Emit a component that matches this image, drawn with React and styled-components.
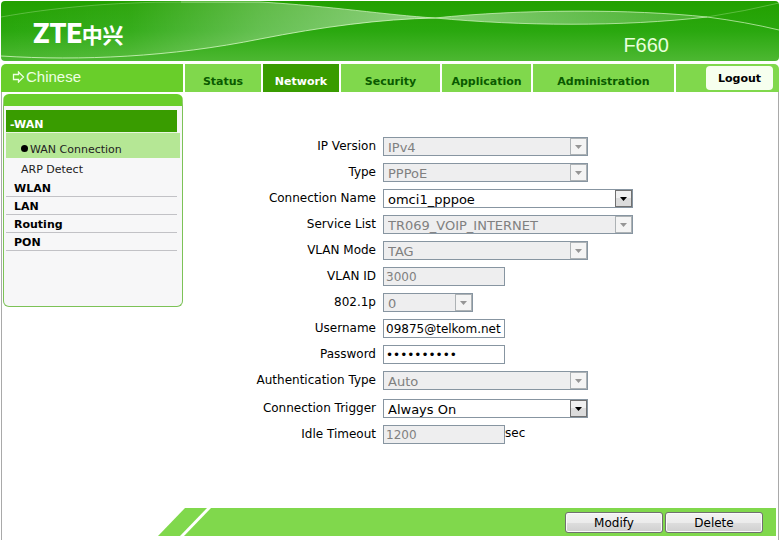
import React from 'react';
import styled, { createGlobalStyle, css } from 'styled-components';

const GlobalStyle = createGlobalStyle`
  * {
    box-sizing: border-box;
  }

  body {
    margin: 0;
    background: #ffffff;
    color: #000000;
    font-family: Verdana, 'DejaVu Sans', sans-serif;
    font-size: 12px;
  }

  button,
  input,
  select {
    font-family: inherit;
    margin: 0;
  }
`;

const Page = styled.div`
  display: flex;
  flex-direction: column;
  min-height: 100vh;
  padding: 1px 3px 0 1px;
`;

const Banner = styled.header`
  position: relative;
  display: flex;
  justify-content: space-between;
  height: 60px;
  overflow: hidden;
  border-radius: 4px;
  background: linear-gradient(#22a000, #2aa80f 50%, #4db832);
`;

const BannerWaves = styled.svg`
  position: absolute;
  inset: 0;
  width: 100%;
  height: 100%;
`;

const Logo = styled.div`
  position: relative;
  display: flex;
  align-items: center;
  padding: 6px 0 0 32px;
  color: #ffffff;
  font: 900 27px/40px Roboto, 'Liberation Sans', sans-serif;

  span {
    font: bold 21px/40px 'Noto Sans CJK SC', sans-serif;
  }
`;

const Model = styled.div`
  position: relative;
  padding: 32px 110px 0 0;
  color: #e9ffdc;
  font: 20px/24px 'Liberation Sans', Arial, sans-serif;
`;

const Nav = styled.nav`
  display: grid;
  grid-template-columns: 182px 76fr 76fr 99fr 89fr 141fr 103fr;
  gap: 2px;
  height: 28px;
  margin-top: 3px;
`;

const Language = styled.a`
  display: flex;
  align-items: center;
  gap: 1px;
  padding: 0 0 2px 11px;
  border-radius: 5px 0 0 0;
  background: #69ce2a;
  color: #edffe2;
  font: 15px/20px 'Liberation Sans', Arial, sans-serif;
  text-decoration: none;
`;

const Tab = styled.a`
  padding-top: 10px;
  background: ${props => (props.$active ? '#399c00' : '#80d84c')};
  color: ${props => (props.$active ? '#ffffff' : '#0a5a00')};
  font-size: 11px;
  font-weight: bold;
  line-height: 16px;
  text-align: center;
  text-decoration: none;
`;

const NavEnd = styled.div`
  display: flex;
  justify-content: flex-end;
  padding: 2px 6px;
  border-radius: 0 5px 0 0;
  background: #80d84c;
`;

const Logout = styled.button`
  width: 67px;
  height: 24px;
  padding: 0;
  border: 0;
  border-radius: 4px;
  background: #f6ffee;
  color: #000000;
  font-size: 11px;
  font-weight: bold;
`;

const Body = styled.div`
  display: flex;
  flex: 1;
  flex-direction: column;
  border: solid #a9a9a9;
  border-width: 0 1px;
`;

const Content = styled.div`
  display: flex;
  flex: 1;
  align-items: flex-start;
  padding: 2px 0 0 1px;
`;

const Sidebar = styled.aside`
  width: 180px;
  min-height: 213px;
  padding: 0 2px;
  border: 1px solid #7cc257;
  border-top: 12px solid #69ce2a;
  border-radius: 6px;
  background: #f7f7f8;
`;

const MenuHeading = styled.a`
  display: block;
  height: 23px;
  margin: 4px 3px 0 0;
  padding: 6px 0 0 4px;
  border-bottom: 1px solid #e8f6df;
  background: #399c00;
  color: #ffffff;
  font-size: 11px;
  font-weight: bold;
  line-height: 18px;
  text-decoration: none;
`;

const SubItem = styled.a`
  display: flex;
  align-items: flex-end;
  height: ${props => (props.$active ? '25px' : '21px')};
  padding: 0 0 ${props => (props.$active ? '1px' : '2px')} 15px;
  background: ${props => (props.$active ? '#b5e795' : 'transparent')};
  color: #222222;
  font-size: 11px;
  line-height: 14px;
  text-decoration: none;
`;

const Dot = styled.span`
  width: 7px;
  height: 7px;
  margin: 0 2px 5px 0;
  border-radius: 50%;
  background: #000000;
`;

const MenuItem = styled.a`
  display: block;
  height: 18px;
  margin-right: 3px;
  padding-left: 8px;
  border-bottom: 1px solid #c2c2c6;
  color: #000000;
  font-size: 11px;
  font-weight: bold;
  line-height: 20px;
  text-decoration: none;
`;

const Form = styled.form`
  display: flex;
  flex: 1;
  flex-direction: column;
  gap: 9px;
  padding-top: 43px;
`;

const Group = styled.div`
  display: flex;
  flex-direction: column;
  gap: 7px;
`;

const Row = styled.div`
  display: grid;
  grid-template-columns: minmax(130px, 193px) 1fr;
  column-gap: 7px;
  height: 19px;
`;

const Label = styled.label`
  line-height: 19px;
  text-align: right;
  white-space: nowrap;
`;

const Control = styled.div`
  display: flex;
`;

const Unit = styled.span`
  line-height: 16px;
`;

const SelectWrap = styled.div`
  position: relative;
  width: ${props => props.$width}px;
  height: 19px;
`;

const field = css`
  height: 19px;
  border: 1px solid #8795a1;
  border-radius: 0;
  background: #ffffff;
  color: #000000;

  &:disabled {
    background: #eeeeef;
    color: #808080;
    opacity: 1;
  }
`;

const Select = styled.select`
  ${field}
  width: 100%;
  padding: 1px 20px 0 4px;
  font-size: 13px;
  appearance: none;
`;

const Arrow = styled.svg`
  position: absolute;
  top: 1px;
  right: 1px;
  width: 17px;
  height: 17px;
  pointer-events: none;
`;

const TextInput = styled.input`
  ${field}
  width: 122px;
  padding: 1px 0 0 2px;
  font-size: 12px;
`;

const Footer = styled.footer`
  display: flex;
  height: 28px;
  margin: 0 2px 4px 156px;
`;

const Slant = styled.svg`
  width: 56px;
  height: 28px;
`;

const Actions = styled.div`
  display: flex;
  flex: 1;
  align-items: center;
  justify-content: flex-end;
  gap: 2px;
  padding: 1px 13px 0 0;
  background: #80d84c;
`;

const ActionButton = styled.button`
  width: 98px;
  height: 21px;
  padding: 0;
  border: 1px solid #707070;
  border-radius: 3px;
  background: linear-gradient(#f3f3f3, #ebebeb 50%, #dddddd 51%, #cfcfcf);
  box-shadow: inset 0 0 0 1px #fafafa;
  color: #000000;
  font-size: 12px;
`;

const tabs = ['Status', 'Network', 'Security', 'Application', 'Administration'];
const menu = ['WLAN', 'LAN', 'Routing', 'PON'];

const connectionFields = [
  { id: 'ipVersion', label: 'IP Version', type: 'select', value: 'IPv4', width: 205, disabled: true },
  { id: 'linkType', label: 'Type', type: 'select', value: 'PPPoE', width: 205, disabled: true },
  { id: 'connName', label: 'Connection Name', type: 'select', value: 'omci1_pppoe', width: 250 },
  { id: 'serviceList', label: 'Service List', type: 'select', value: 'TR069_VOIP_INTERNET', width: 250, disabled: true },
  { id: 'vlanMode', label: 'VLAN Mode', type: 'select', value: 'TAG', width: 205, disabled: true },
  { id: 'vlanId', label: 'VLAN ID', type: 'text', value: '3000', disabled: true },
  { id: 'priority', label: '802.1p', type: 'select', value: '0', width: 90, disabled: true },
  { id: 'username', label: 'Username', type: 'text', value: '09875@telkom.net' },
  { id: 'password', label: 'Password', type: 'password', value: '0000000000' },
  { id: 'authType', label: 'Authentication Type', type: 'select', value: 'Auto', width: 205, disabled: true },
];

const triggerFields = [
  { id: 'trigger', label: 'Connection Trigger', type: 'select', value: 'Always On', width: 205 },
  { id: 'idleTimeout', label: 'Idle Timeout', type: 'text', value: '1200', disabled: true, unit: 'sec' },
];

const DropArrow = ({ disabled }) => (
  <Arrow viewBox="0 0 17 17" aria-hidden="true">
    <rect
      x="0.5"
      y="0.5"
      width="16"
      height="16"
      fill={disabled ? '#f4f4f4' : '#dcdcdc'}
      stroke={disabled ? '#adb2b5' : '#707070'}
    />
    {!disabled && <rect x="1" y="1" width="15" height="7" fill="#f0f0f0" />}
    <path d="M5 7h7L8.500 11z" fill={disabled ? '#969696' : '#000000'} />
  </Arrow>
);

const Field = ({ id, label, type, value, width, disabled, unit }) => (
  <Row>
    <Label htmlFor={id}>{label}</Label>
    <Control>
      {type === 'select' ? (
        <SelectWrap $width={width}>
          <Select id={id} disabled={disabled}>
            <option>{value}</option>
          </Select>
          <DropArrow disabled={disabled} />
        </SelectWrap>
      ) : (
        <TextInput id={id} type={type} defaultValue={value} disabled={disabled} />
      )}
      {unit && <Unit>{unit}</Unit>}
    </Control>
  </Row>
);

const Waves = () => (
  <BannerWaves viewBox="0 0 778 60" preserveAspectRatio="none" aria-hidden="true">
    <defs>
      <linearGradient id="ribbon">
        <stop offset="0" stopColor="#ffffff" stopOpacity="0" />
        <stop offset="0.3" stopColor="#ffffff" stopOpacity="0.06" />
        <stop offset="0.6" stopColor="#ffffff" stopOpacity="0.28" />
        <stop offset="1" stopColor="#ffffff" stopOpacity="0.5" />
      </linearGradient>
      <linearGradient id="tail">
        <stop offset="0" stopColor="#ffffff" stopOpacity="0.45" />
        <stop offset="1" stopColor="#ffffff" stopOpacity="0.15" />
      </linearGradient>
    </defs>
    <path
      d="M0 16C50 7 110 1 180 1H259C330 5 385 14 434 17C380 18 320 26 259 38C170 56 80 60 0 55Z"
      fill="url(#ribbon)"
    />
    <path d="M434 17C520 8 630 8 706 16C620 26 520 25 434 17Z" fill="url(#tail)" />
    <g fill="none" stroke="#d6f7c4">
      <path d="M0 16C50 7 110 1 180 1" strokeOpacity="0.3" />
      <path d="M180 1H259C330 5 385 14 434 17C520 25 620 26 706 16" strokeOpacity="0.7" />
      <path d="M706 16Q745 10 778 2" strokeOpacity="0.3" />
      <path d="M0 55C80 60 170 56 259 38C320 26 380 18 434 17" strokeOpacity="0.8" />
      <path d="M434 17C520 8 630 8 706 16Q745 21 778 29" strokeOpacity="0.7" />
    </g>
  </BannerWaves>
);

const App = () => (
  <>
    <GlobalStyle />
    <Page>
      <Banner>
        <Waves />
        <Logo>
          ZTE<span>中兴</span>
        </Logo>
        <Model>F660</Model>
      </Banner>

      <Nav>
        <Language href="#chinese">
          <svg width="13" height="12" viewBox="0 0 13 12" fill="none" stroke="#edffe2" aria-hidden="true">
            <path d="M1.500 3.500H6.500V1L11.500 6L6.500 11V8.500H1.500Z" strokeWidth="1.3" />
          </svg>
          Chinese
        </Language>
        {tabs.map(tab => (
          <Tab key={tab} href={`#${tab.toLowerCase()}`} $active={tab === 'Network'}>
            {tab}
          </Tab>
        ))}
        <NavEnd>
          <Logout type="button">Logout</Logout>
        </NavEnd>
      </Nav>

      <Body>
        <Content>
          <Sidebar>
            <MenuHeading href="#wan">-WAN</MenuHeading>
            <SubItem href="#wan-connection" $active>
              <Dot />
              WAN Connection
            </SubItem>
            <SubItem href="#arp-detect">ARP Detect</SubItem>
            {menu.map(item => (
              <MenuItem key={item} href={`#${item.toLowerCase()}`}>
                {item}
              </MenuItem>
            ))}
          </Sidebar>

          <Form>
            <Group>
              {connectionFields.map(item => (
                <Field key={item.id} {...item} />
              ))}
            </Group>
            <Group>
              {triggerFields.map(item => (
                <Field key={item.id} {...item} />
              ))}
            </Group>
          </Form>
        </Content>

        <Footer>
          <Slant viewBox="0 0 56 28" fill="#80d84c" aria-hidden="true">
            <path d="M0 28L27 0H49L22 28Z" />
            <path d="M26 28L53 0H56V28Z" />
          </Slant>
          <Actions>
            <ActionButton type="button">Modify</ActionButton>
            <ActionButton type="button">Delete</ActionButton>
          </Actions>
        </Footer>
      </Body>
    </Page>
  </>
);

export default App;
